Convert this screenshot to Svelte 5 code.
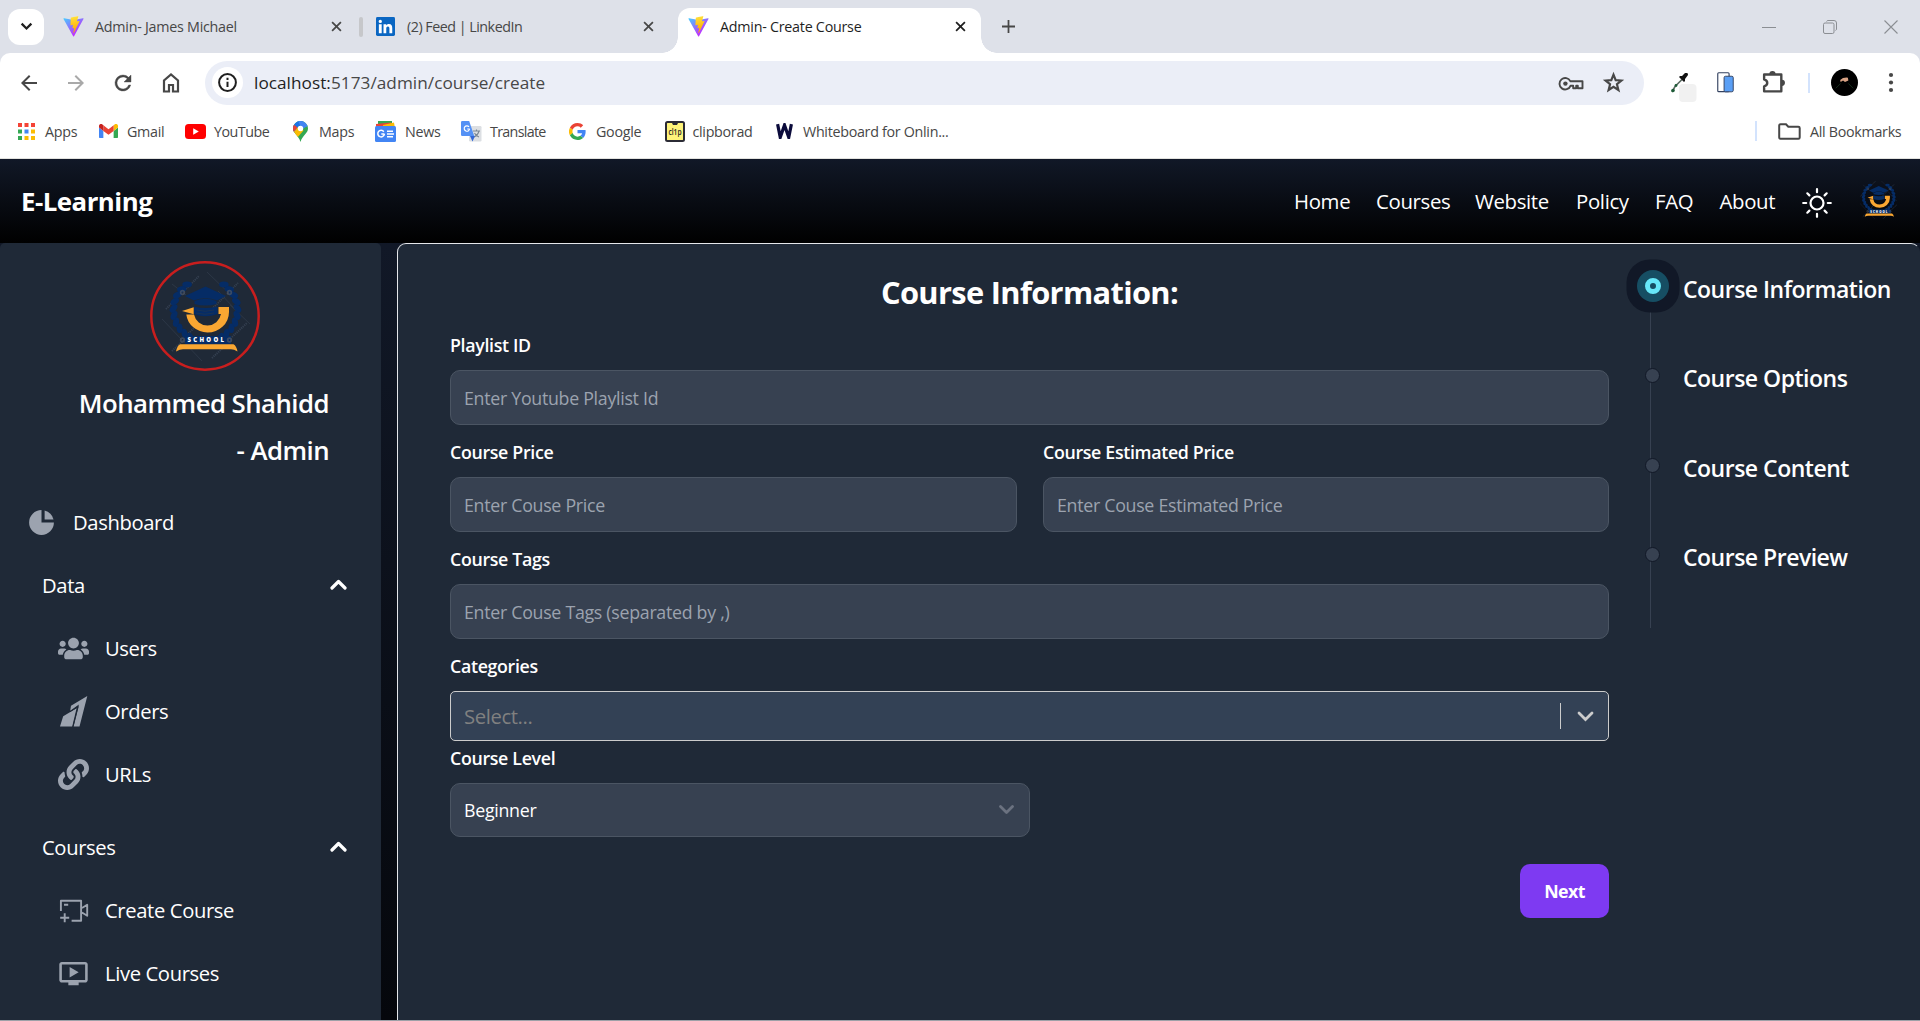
<script>
  const bookmarks = ['Apps', 'Gmail', 'YouTube', 'Maps', 'News', 'Translate', 'Google', 'clipborad', 'Whiteboard for Onlin...'];
  const navLinks = ['Home', 'Courses', 'Website', 'Policy', 'FAQ', 'About'];
  const sections = [
    { title: 'Data', items: ['Users', 'Orders', 'URLs'] },
    { title: 'Courses', items: ['Create Course', 'Live Courses'] },
  ];
  const steps = ['Course Information', 'Course Options', 'Course Content', 'Course Preview'];
  let current = $state(0);

  // Leaves of the laurel wreath, placed along two mirrored arcs
  const leaves = [];
  for (let i = 0; i < 10; i++) {
    const a = ((118 + i * 13) * Math.PI) / 180;
    leaves.push({ x: 55.5 + 32 * Math.cos(a), y: 49 + 31 * Math.sin(a), r: 118 + i * 13 });
  }
  const appDots = ['#f44336', '#f44336', '#f44336', '#34a853', '#4285f4', '#fbbc04', '#34a853', '#fbbc04', '#fbbc04'];
</script>

{#snippet vite(id)}
  <svg class="vite" viewBox="0 0 410 404" preserveAspectRatio="none">
    <defs>
      <linearGradient id="va{id}" x1="6" y1="33" x2="235" y2="344" gradientUnits="userSpaceOnUse"><stop stop-color="#41d1ff" /><stop offset="1" stop-color="#bd34fe" /></linearGradient>
      <linearGradient id="vb{id}" x1="194" y1="9" x2="236" y2="293" gradientUnits="userSpaceOnUse"><stop stop-color="#ffea83" /><stop offset=".08" stop-color="#ffdd35" /><stop offset="1" stop-color="#ffa800" /></linearGradient>
    </defs>
    <path fill="url(#va{id})" d="M399.641 59.5246L215.643 388.545C211.844 395.338 202.084 395.378 198.228 388.618L10.5817 59.5563C6.38087 52.1896 12.6802 43.2665 21.0281 44.7586L205.223 77.6824C206.398 77.8924 207.601 77.8904 208.776 77.6763L389.119 44.8058C397.439 43.2894 403.768 52.1434 399.641 59.5246Z" />
    <path fill="url(#vb{id})" d="M292.965 1.5744L156.801 28.2552C154.563 28.6937 152.906 30.5903 152.771 32.8664L144.395 174.33C144.198 177.662 147.258 180.248 150.51 179.498L188.42 170.749C191.967 169.931 195.172 173.055 194.443 176.622L183.18 231.775C182.422 235.487 185.907 238.661 189.532 237.56L212.947 230.446C216.577 229.344 220.065 232.527 219.297 236.242L201.398 322.875C200.278 328.294 207.486 331.249 210.492 326.603L212.5 323.5L323.454 102.072C325.312 98.3645 322.108 94.137 318.036 94.9228L279.014 102.454C275.347 103.161 272.227 99.746 273.262 96.1583L298.731 7.86689C299.767 4.27314 296.636 .855181 292.965 1.5744Z" />
  </svg>
{/snippet}

{#snippet cross()}
  <svg class="cross" viewBox="0 0 12 12"><path d="M1.2 1.2l9.6 9.6M10.8 1.2l-9.6 9.6" stroke="currentColor" stroke-width="1.9" /></svg>
{/snippet}

{#snippet school()}
  <g stroke="#3a4658" stroke-width=".6" opacity=".8">
    <path d="M22 23l14 11M57 11l28 27M12 58l40 42M68 30l16 17M80 44l20 19" fill="none" />
    <path d="M36 28L49 15M16 48l12-12M62 48L75 35M77 33l11-11M37 74l12-12M22 90l12-11M62 97l13-12M82 76l15-14" fill="none" stroke-width="2" stroke-dasharray="1.2 .9" />
  </g>
  <g fill="#052c66">
    {#each leaves as l}
      <ellipse cx={l.x} cy={l.y} rx="3" ry="4.8" transform="rotate({l.r + 35} {l.x} {l.y})" />
      <ellipse cx={111 - l.x} cy={l.y} rx="3" ry="4.8" transform="rotate({-l.r - 35} {111 - l.x} {l.y})" />
    {/each}
    <path d="M55.5 25.5L76 35 67 39.5Q55.5 35 44 39.5L35 35z" />
    <path d="M44.5 40Q55.5 35.5 66.5 40V43Q55.5 46 44.5 43z" />
    <path d="M44 45.5Q55.5 48.5 67.5 45.5V53Q55.5 57.5 44 53z" />
    <rect x="35" y="75" width="46" height="8.5" />
  </g>
  <path d="M46.5 49Q55 51.5 64 49M46 52Q55 54.5 64 52" fill="none" stroke="#1d3350" stroke-width=".9" />
  <g fill="none" stroke="#475264" stroke-width="1.8" opacity=".8"><circle cx="32.5" cy="31.5" r="1.800" /><circle cx="79.5" cy="31.5" r="1.800" /><circle cx="32.5" cy="79" r="1.800" /><circle cx="79.5" cy="79" r="1.800" /></g>
  <g fill="#faa732">
    <path d="M32 50l11.7-3.7v7z" />
    <path d="M36.3 53.5h7.7A13.8 13.8 0 0 0 57.5 64.500 14 14 0 0 0 71 53h-2.500v-7H79v5A21.3 20.5 0 0 1 57.5 71.5 21.3 20.5 0 0 1 36.3 53.5z" />
    <path d="M30 83.3Q27 85 26 90.5q4-2.300 7-2.300h48q3 0 6.500 2.300-1-5.500-4-7.200z" />
  </g>
  <text x="37.5" y="81.4" textLength="36.5" font-size="6" font-weight="800" fill="#fff">SCHOOL</text>
{/snippet}

{#snippet chevronUp()}
  <svg class="up" viewBox="0 0 17 11"><path d="M2 9l6.5-6.5L15 9" fill="none" stroke="#fff" stroke-width="3.2" stroke-linecap="round" stroke-linejoin="round" /></svg>
{/snippet}

<div class="window">
  <header class="browser">
    <div class="tabs">
      <button class="tab-search" aria-label="Search tabs"><svg viewBox="0 0 12 8"><path d="M1.5 1.5L6 6l4.5-4.5" fill="none" stroke="#1f1f1f" stroke-width="2.1" /></svg></button>
      <div class="tab first">{@render vite('a')}<span>Admin- James Michael</span>{@render cross()}</div>
      <i class="tab-sep"></i>
      <div class="tab second">
        <svg class="linkedin" viewBox="0 0 20 20"><rect width="20" height="20" rx="1.5" fill="#0a66c2" /><path fill="#fff" d="M3 7.6h3V17H3zM4.5 2.9a1.75 1.75 0 1 1 0 3.5 1.75 1.75 0 0 1 0-3.5zM7.9 7.6h2.8v1.3c.5-.9 1.5-1.5 2.9-1.5 2.8 0 3.5 1.8 3.5 4.3V17h-3v-4.7c0-1.2-.1-2.4-1.6-2.4s-1.7 1.2-1.7 2.3V17H7.9z" /></svg>
        <span class="tight">(2) Feed | LinkedIn</span>{@render cross()}
      </div>
      <div class="tab active">{@render vite('b')}<span>Admin- Create Course</span>{@render cross()}</div>
      <svg class="plus" viewBox="0 0 14 14"><path d="M7 0v14M0 7h14" stroke="#474747" stroke-width="1.9" /></svg>
      <div class="controls">
        <svg viewBox="0 0 14 14"><path d="M0 7.5h14" stroke="#8b8e93" /></svg>
        <svg viewBox="0 0 14 14"><rect x=".5" y="3" width="10.5" height="10.5" rx="1.5" fill="none" stroke="#8b8e93" /><path d="M3.5 1.5Q4 .5 5 .5h6q2.5 0 2.5 2.5v6q0 1-1 1.5" fill="none" stroke="#8b8e93" /></svg>
        <svg viewBox="0 0 14 14"><path d="M.5.5l13 13M13.500.5l-13 13" stroke="#8b8e93" stroke-width="1.1" /></svg>
      </div>
    </div>

    <div class="toolbar">
      <div class="history">
        <svg viewBox="0 0 24 24" fill="#474747"><path d="M20 11H7.83l5.59-5.59L12 4l-8 8 8 8 1.41-1.41L7.83 13H20v-2z" /></svg>
        <svg viewBox="0 0 24 24" fill="#a9a9a9"><path d="M12 4l-1.41 1.41L16.17 11H4v2h12.17l-5.58 5.59L12 20l8-8z" /></svg>
        <svg viewBox="0 0 24 24" fill="#474747"><path d="M17.65 6.35A7.96 7.96 0 0 0 12 4a8 8 0 1 0 7.73 10h-2.08A6 6 0 1 1 12 6c1.66 0 3.14.69 4.22 1.78L13 11h7V4z" stroke="#474747" stroke-width=".4" /></svg>
        <svg viewBox="0 0 24 24" fill="none" stroke="#474747" stroke-width="2.2"><path d="M5 20.5V9.5l7-6 7 6v11h-5v-6.500h-4v6.500z" /></svg>
      </div>
      <div class="omnibox">
        <i class="info"><svg viewBox="0 0 20 20"><circle cx="10" cy="10" r="8" fill="none" stroke="#1f1f1f" stroke-width="1.9" /><path d="M10 9.200v5M10 5.500v2" stroke="#1f1f1f" stroke-width="1.9" /></svg></i>
        <span class="url"><b>localhost:</b>5173/admin/course/create</span>
        <svg class="key" viewBox="0 0 26 16"><path d="M12.300 5.200H24.500v7h-4.700V9.800h-1.600v2.400h-3V9.800h-2.700A5.700 5.700 0 1 1 12.300 5.200z" fill="none" stroke="#474747" stroke-width="1.9" stroke-linejoin="round" /><circle cx="7.400" cy="7.600" r="2.200" fill="#474747" /></svg>
        <svg class="star" viewBox="0 0 24 24"><path d="M12 4.500l2.100 5.200 5.500.4-4.300 3.600 1.400 5.500-4.700-3-4.700 3 1.400-5.500-4.300-3.600 5.500-.4z" fill="none" stroke="#474747" stroke-width="2.1" /></svg>
      </div>
      <div class="extensions">
        <svg class="dropper" viewBox="0 0 28 30"><path d="M2 19L5 13.500l7-7" fill="none" stroke="#5b6b62" stroke-width="1.600" /><circle cx="3" cy="17.500" r="1.800" fill="#1d5b37" /><circle cx="6" cy="12.500" r="1.400" fill="#1d5b37" /><path d="M10 3h2l3-3q3-1 3 2l-3 4v2l-1 1-5-5z" fill="#111" /><rect x="9" y="11" width="17.500" height="18" rx="4" fill="#f1f1f1" /></svg>
        <svg class="device" viewBox="0 0 18 22"><rect x=".8" y=".8" width="12" height="20" rx="1" fill="#fff" stroke="#33415f" stroke-width="1.200" /><rect x="7.500" y="4.500" width="9.700" height="16.500" rx="1.500" fill="#5a9ff5" stroke="#33415f" /></svg>
        <svg class="puzzle" viewBox="0 0 24 24"><path d="M3 4.300h16.500v16.200H3v-4.800q3-1 3-3.300T3 9.100z" fill="none" stroke="#474747" stroke-width="2.300" stroke-linejoin="round" /><path d="M8 4a3 3 0 0 1 6 0zM20 9.300a3 3 0 0 1 0 6z" fill="#474747" /></svg>
        <i class="divider"></i>
        <svg class="profile" viewBox="0 0 28 28"><circle cx="14" cy="14" r="14" /><path d="M9.500 11.500q3-3 8-2.500l.5 3-3.500 1.500-2-1.500-2.500 1.500z" fill="#d9a284" /><path d="M5 20l5-5M23 20l-5-5" stroke="#1d3a25" stroke-width=".8" /></svg>
        <svg class="kebab" viewBox="0 0 6 22" fill="#474747"><circle cx="3" cy="3" r="2.100" /><circle cx="3" cy="10.500" r="2.100" /><circle cx="3" cy="18" r="2.100" /></svg>
      </div>
    </div>

    <div class="bookmarks">
      {#each bookmarks as name, i}
        <a class="bookmark" href="#{name}">
          {#if i === 0}
            <svg width="17" viewBox="0 0 17 17">{#each appDots as c, n}<rect x={(n % 3) * 6.5} y={Math.floor(n / 3) * 6.5} width="4" height="4" fill={c} />{/each}</svg>
          {:else if i === 1}
            <svg width="19" viewBox="0 0 24 18"><path fill="#4285f4" d="M1.600 18H5.500V8.700L0 4.500v12A1.600 1.600 0 0 0 1.600 18z" /><path fill="#34a853" d="M18.500 18h3.900a1.600 1.600 0 0 0 1.600-1.600V4.500l-5.500 4.200z" /><path fill="#fbbc04" d="M18.500 1.600v7.100L24 4.500V2.400c0-2-2.300-3.200-3.900-2z" /><path fill="#ea4335" d="M5.500 8.700V1.600L12 6.500l6.500-4.900v7.100L12 13.600z" /><path fill="#c5221f" d="M0 2.400v2.100l5.500 4.200V1.600L3.900.4C2.300-.8 0 .4 0 2.400z" /></svg>
          {:else if i === 2}
            <svg width="21" viewBox="0 0 21 15"><rect width="21" height="15" rx="3.500" fill="#f00" /><path d="M8.200 4.300l5.600 3.200-5.600 3.200z" fill="#fff" /></svg>
          {:else if i === 3}
            <svg width="15" viewBox="0 0 15 21"><defs><clipPath id="pin"><path d="M7.500 0A7.500 7.500 0 0 1 15 7.500c0 5-5.500 6.500-7.500 13.500C5.500 14 0 12.500 0 7.500A7.500 7.500 0 0 1 7.500 0z" /></clipPath></defs><g clip-path="url(#pin)"><rect width="15" height="21" fill="#34a853" /><path d="M0 0h10L2 12 0 10z" fill="#1a73e8" /><path d="M0 3l4.500 3.500L0 12z" fill="#ea4335" /><path d="M0 12L5.500 5.500l5 4L4 17z" fill="#fbbc04" /><path d="M5 0h10v5L9 8z" fill="#4285f4" /></g><circle cx="7.500" cy="7.500" r="2.700" fill="#fff" /></svg>
          {:else if i === 4}
            <svg width="21" viewBox="0 0 21 21"><path d="M3 0h14v6H3z" fill="#34a853" /><path d="M1 3l15-1.500 3 5H1z" fill="#ea4335" /><path d="M8 4l11-2.500 1 6H8z" fill="#fbbc04" /><rect y="5" width="21" height="16" rx="1.500" fill="#4285f4" /><path d="M9.500 13H6.300M8.800 10.700A3.300 3.300 0 1 0 9.400 13" fill="none" stroke="#fff" stroke-width="1.500" /><path d="M12 10.300h6M12 13h7M12 15.800h6" stroke="#fff" stroke-width="1.400" /></svg>
          {:else if i === 5}
            <svg width="21" viewBox="0 0 21 21"><rect x="8" y="5" width="12.500" height="15.500" rx="1.200" fill="#dcdfe3" /><path d="M12 10h7M15.500 8.500V10M18 10q-1 4-5 6M13.500 12q1.500 3 4.500 4" stroke="#7b8894" stroke-width="1.100" fill="none" /><path d="M9 15h5l-2.500 5.500z" fill="#3367d6" /><path d="M1.200 0h7l5 15H1.200A1.200 1.200 0 0 1 0 13.800V1.200A1.200 1.200 0 0 1 1.200 0z" fill="#5491f5" /><path d="M8.800 8H6.200M8 5.800A2.700 2.700 0 1 0 8.600 8" fill="none" stroke="#fff" stroke-width="1.200" /></svg>
          {:else if i === 6}
            <svg width="17" viewBox="0 0 48 48"><path fill="#ea4335" d="M24 9.500c3.540 0 6.710 1.220 9.210 3.600l6.850-6.850C35.900 2.380 30.470 0 24 0 14.620 0 6.510 5.380 2.560 13.220l7.980 6.190C12.430 13.720 17.740 9.500 24 9.500z" /><path fill="#4285f4" d="M46.980 24.550c0-1.570-.15-3.090-.38-4.550H24v9.020h12.940c-.58 2.960-2.260 5.480-4.780 7.180l7.730 6c4.510-4.180 7.090-10.360 7.090-17.650z" /><path fill="#fbbc05" d="M10.530 28.590a14.500 14.500 0 0 1 0-9.180l-7.980-6.190a24 24 0 0 0 0 21.560l7.980-6.190z" /><path fill="#34a853" d="M24 48c6.480 0 11.930-2.130 15.890-5.810l-7.730-6c-2.150 1.450-4.920 2.300-8.160 2.300-6.260 0-11.570-4.220-13.470-9.910l-7.980 6.190C6.510 42.620 14.620 48 24 48z" /></svg>
          {:else if i === 7}
            <svg width="20" viewBox="0 0 20 21"><rect x="1" y="1" width="18" height="19" rx="1.500" fill="#fff47a" stroke="#2b2b35" stroke-width="2" /><path d="M6.500 1h7l-1.500 3h-4z" fill="#2b2b35" /><text x="3.500" y="13.500" font-size="8" font-weight="600" textLength="13" lengthAdjust="spacingAndGlyphs" letter-spacing="0" fill="#222">cl1p</text></svg>
          {:else}
            <svg width="17" viewBox="0 0 16 15"><path d="M1.500 1l2.500 12.500L8 2l4 11.500L14.500 1" fill="none" stroke="#0b0b3b" stroke-width="3" /></svg>
          {/if}
          <span>{name}</span>
        </a>
      {/each}
      <i class="divider"></i>
      <a class="bookmark" href="#all">
        <svg width="23" viewBox="0 0 23 17"><path d="M1.200 14.500v-12q0-1.300 1.300-1.300h5.500l2.300 2.500h10q1.400 0 1.400 1.400v9.400q0 1.300-1.300 1.300h-18q-1.200 0-1.200-1.300z" fill="none" stroke="#474747" stroke-width="2" /></svg>
        <span>All Bookmarks</span>
      </a>
    </div>
  </header>

  <nav class="site-nav">
    <strong>E-Learning</strong>
    <div class="links">
      {#each navLinks as link}<a href="#{link}">{link}</a>{/each}
    </div>
    <svg class="sun" viewBox="0 0 30 30"><circle cx="15" cy="15" r="6.500" /><path d="M15 1.200v3M15 25.800v3M1.200 15h3M25.800 15h3M5.300 5.300l2.100 2.100M22.600 22.600l2.100 2.100M5.300 24.700l2.100-2.100M22.600 7.400l2.100-2.100" /></svg>
    <svg class="brand" viewBox="17 15 76 80">{@render school()}</svg>
  </nav>

  <div class="body">
    <aside class="sidebar">
      <svg class="avatar" viewBox="0 0 110 110"><circle cx="55" cy="55" r="53.700" fill="none" stroke="#c81e1e" stroke-width="2.500" />{@render school()}</svg>
      <h2>Mohammed Shahidd<br />- Admin</h2>
      <a class="row top" href="#dashboard">
        <svg width="31" height="31" viewBox="0 0 20 20"><path d="M2 10a8 8 0 018-8v8h8a8 8 0 11-16 0z" /><path d="M12 2.252A8.014 8.014 0 0117.748 8H12V2.252z" /></svg>
        <span>Dashboard</span>
      </a>
      {#each sections as section}
        <section>
          <div class="row head"><span>{section.title}</span>{@render chevronUp()}</div>
          {#each section.items as item}
            <a class="row" href="#{item}">
              {#if item === 'Users'}
                <svg width="31" height="31" viewBox="0 0 640 512"><path d="M96 224c35.300 0 64-28.700 64-64s-28.700-64-64-64-64 28.700-64 64 28.700 64 64 64zm448 0c35.300 0 64-28.700 64-64s-28.700-64-64-64-64 28.700-64 64 28.700 64 64 64zm32 32h-64c-17.600 0-33.500 7.100-45.100 18.600 40.300 22.100 68.900 62 75.100 109.400h66c17.700 0 32-14.300 32-32v-32c0-35.300-28.700-64-64-64zm-256 0c61.900 0 112-50.100 112-112S381.900 32 320 32 208 82.100 208 144s50.100 112 112 112zm76.800 32h-8.300c-20.800 10-43.900 16-68.500 16s-47.600-6-68.500-16h-8.300C179.600 288 128 339.600 128 403.200V432c0 26.500 21.500 48 48 48h288c26.500 0 48-21.500 48-48v-28.800c0-63.600-51.600-115.200-115.200-115.200zm-223.700-13.400C161.500 263.100 145.600 256 128 256H64c-35.300 0-64 28.700-64 64v32c0 17.700 14.300 32 32 32h65.900c6.300-47.400 34.900-87.300 75.200-109.400z" /></svg>
              {:else if item === 'Orders'}
                <svg width="31" height="31" viewBox="0 0 31 31"><path d="M29.300 0L13 9.800l-.8 5 8.700-6.300L15.500 30.500H21.500z" /><path d="M2 30.500l3.200-10.200 13.400-8-4.400 18.200z" /><path d="M12 15.600l8.200-5L15 30.800" fill="none" stroke="#1f2937" stroke-width="1" /></svg>
              {:else if item === 'URLs'}
                <svg width="31" height="31" viewBox="0 0 512 512"><path d="M326.612 185.391c59.747 59.809 58.927 155.698.36 214.590-.11.120-.240.250-.360.370l-67.200 67.200c-59.270 59.270-155.699 59.262-214.960 0-59.270-59.260-59.270-155.700 0-214.960l37.106-37.106c9.840-9.840 26.786-3.300 27.294 10.606.648 17.722 3.826 35.527 9.690 52.721 1.986 5.822.567 12.262-3.783 16.612l-13.087 13.087c-28.026 28.026-28.905 73.660-1.155 101.960 28.024 28.579 74.086 28.749 102.325.510l67.200-67.190c28.191-28.191 28.073-73.757 0-101.830-3.701-3.694-7.429-6.564-10.341-8.569a16.037 16.037 0 0 1-6.947-12.606c-.396-10.567 3.348-21.456 11.698-29.806l21.054-21.055c5.521-5.521 14.182-6.199 20.584-1.731a152.482 152.482 0 0 1 20.522 17.197zM467.547 44.449c-59.261-59.262-155.690-59.270-214.960 0l-67.200 67.200c-.120.120-.250.250-.360.370-58.566 58.892-59.387 154.781.360 214.590a152.454 152.454 0 0 0 20.521 17.196c6.402 4.468 15.064 3.789 20.584-1.731l21.054-21.055c8.350-8.350 12.094-19.239 11.698-29.806a16.037 16.037 0 0 0-6.947-12.606c-2.912-2.005-6.640-4.875-10.341-8.569-28.073-28.073-28.191-73.639 0-101.830l67.200-67.190c28.239-28.239 74.300-28.069 102.325.510 27.750 28.300 26.872 73.934-1.155 101.960l-13.087 13.087c-4.350 4.350-5.769 10.790-3.783 16.612 5.864 17.194 9.042 34.999 9.690 52.721.509 13.906 17.454 20.446 27.294 10.606l37.106-37.106c59.271-59.259 59.271-155.699.001-214.959z" /></svg>
              {:else if item === 'Create Course'}
                <svg width="31" height="31" viewBox="0 0 31 31" class="lines"><path d="M2.900 16V5.700h20.200v20h-9.500M24 13l5.200-3.300v11L24 17.500M6 9.800h4.200M6.700 18.300v9M2.200 22.800h9" /></svg>
              {:else}
                <svg width="31" height="31" viewBox="0 0 24 24"><path d="M21 3H3c-1.110 0-2 .89-2 2v12c0 1.100.89 2 2 2h5v2h8v-2h5c1.100 0 1.990-.9 1.990-2L23 5c0-1.110-.9-2-2-2zm0 14H3V5h18v12zm-5-6l-7 4V7z" /></svg>
              {/if}
              <span>{item}</span>
            </a>
          {/each}
        </section>
      {/each}
    </aside>

    <main>
      <form>
        <h1>Course Information:</h1>
        <label>Playlist ID<input placeholder="Enter Youtube Playlist Id" /></label>
        <div class="pair">
          <label>Course Price<input placeholder="Enter Couse Price" /></label>
          <label>Course Estimated Price<input placeholder="Enter Couse Estimated Price" /></label>
        </div>
        <label>Course Tags<input placeholder="Enter Couse Tags (separated by ,)" /></label>
        <div class="field">
          Categories
          <div class="combo"><span>Select...</span><i></i><svg viewBox="0 0 17 11"><path d="M2 2l6.500 6.500L15 2" fill="none" stroke="#ccc" stroke-width="2.800" stroke-linecap="round" /></svg></div>
        </div>
        <div class="field level">
          Course Level
          <div class="select"><span>Beginner</span><svg viewBox="0 0 15 10"><path d="M1.500 1.500l6 6 6-6" fill="none" stroke="#6b7280" stroke-width="2.800" stroke-linecap="round" stroke-linejoin="round" /></svg></div>
        </div>
        <button type="button" class="next" onclick={() => (current = Math.min(current + 1, 3))}>Next</button>
      </form>

      <ol class="steps">
        {#each steps as step, i}
          <li class:current={i === current}><i class="dot"></i><span>{step}</span></li>
        {/each}
      </ol>
    </main>
  </div>
</div>

<style>
  :global(body) { margin: 0; overflow: hidden; }
  * { box-sizing: border-box; }
  svg { display: block; flex: none; }
  a { color: inherit; text-decoration: none; }
  button { border: 0; padding: 0; font: inherit; }
  .window { width: 1920px; height: 1021px; display: flex; flex-direction: column; overflow: hidden; font-family: 'Open Sans', 'Noto Sans', sans-serif; border-bottom: 1px solid #9da1a8; }

  /* Browser chrome */
  .browser { height: 159px; flex: none; background: #dee1e9; border-bottom: 1px solid #e2e2de; color: #474747; font-size: 14.3px; letter-spacing: -0.3px; white-space: nowrap; }
  .tabs { height: 53px; display: flex; align-items: center; padding-left: 8px; }
  .tab-search { width: 36px; height: 36px; border-radius: 12px; background: #fff; display: grid; place-items: center; }
  .tab-search svg { width: 13px; }
  .tab { display: flex; align-items: center; }
  .tab :global(.cross) { width: 11px; margin-left: auto; }
  .first { width: 279px; margin-left: 19px; }
  .second { width: 278px; margin-left: 13px; }
  .vite { width: 21px; height: 21px; margin-right: 11px; }
  .first span, .active span { letter-spacing: -0.25px; }
  .linkedin { width: 19px; height: 19px; margin-right: 12px; }
  .second .tight { letter-spacing: -0.5px; }
  .tab-sep { width: 4px; height: 20px; border-radius: 2px; background: #c6c7ca; margin-left: 17px; }
  .active { position: relative; align-self: flex-end; height: 45px; width: 303px; margin-left: 24px; padding: 0 15px 9px 10px; background: #fff; border-radius: 12px 12px 0 0; color: #1f1f1f; }
  .active::before, .active::after { content: ''; position: absolute; bottom: 0; width: 16px; height: 16px; }
  .active::before { left: -16px; background: radial-gradient(circle at 0 0, transparent 15.5px, #fff 16px); }
  .active::after { right: -16px; background: radial-gradient(circle at 100% 0, transparent 15.5px, #fff 16px); }
  .plus { width: 13px; margin-left: 21px; }
  .controls { display: flex; gap: 47px; margin-left: auto; padding-right: 22px; }
  .controls svg { width: 14px; }

  .toolbar { height: 59px; display: flex; align-items: center; background: #fff; border-radius: 10px 10px 0 0; padding-left: 17px; }
  .history { display: flex; gap: 23.2px; width: 188px; }
  .history svg { width: 24px; }
  .omnibox { width: 1439px; height: 44px; border-radius: 22px; background: #ebeef7; display: flex; align-items: center; padding-left: 7px; }
  .info { width: 31px; height: 31px; border-radius: 50%; background: #fff; display: grid; place-items: center; margin-right: 11px; }
  .info svg { width: 21px; }
  .url { font-size: 17.2px; letter-spacing: 0.04px; color: #474747; }
  .url b { font-weight: 400; color: #1f1f1f; }
  .key { width: 26px; margin: 2px 17px 0 auto; }
  .star { width: 25px; margin-right: 18px; }
  .extensions { flex: 1; display: flex; align-items: center; }
  .dropper { width: 28px; margin: 10px 0 0 26px; }
  .device { width: 17px; margin-left: 19px; }
  .puzzle { width: 25px; margin-left: 27px; }
  .divider { width: 2px; height: 20px; background: #d3e3fd; }
  .extensions .divider { margin-left: 22px; }
  .profile { width: 27px; margin-left: 21px; }
  .kebab { width: 6px; margin-left: 30px; }

  .bookmarks { height: 46px; background: #fff; display: grid; grid-template-columns: 81px 86px 108px 82px 86px 108px 95.5px 111.5px 979px 23px auto; align-items: center; padding: 0 0 8px 18px; }
  .bookmark { display: flex; align-items: center; gap: 9px; }
  .bookmark:nth-child(4) { gap: 11px; }
  .bookmark:nth-child(1), .bookmark:nth-child(7), .bookmark:nth-child(9) { gap: 10px; }
  .bookmark:nth-child(6) { gap: 8px; letter-spacing: -0.7px; }
  .bookmark:nth-child(3) { gap: 8px; letter-spacing: -0.5px; }
  .bookmark:nth-child(8) { gap: 8px; }

  /* Site navigation */
  .site-nav { height: 84px; flex: none; display: flex; align-items: center; padding: 0 23px 0 21px; color: #fff; background: linear-gradient(#111827, #000); }
  .site-nav strong { font-size: 25.8px; letter-spacing: -0.5px; }
  .links { display: grid; grid-template-columns: 82px 99px 101px 79px 64.5px 82.5px; margin-left: auto; font-size: 20.4px; letter-spacing: -0.35px; }
  .sun { width: 30px; margin-top: 4px; fill: none; stroke: #fff; stroke-width: 2.2; stroke-linecap: round; }
  .brand { width: 37px; height: 38px; margin: 0 0 2px 28px; }

  .body { flex: 1; display: flex; gap: 16px; min-height: 0; background: linear-gradient(#111827, #05070c); color: #fff; }

  /* Sidebar */
  .sidebar { width: 381px; flex: none; background: #1f2937; border-radius: 5px 5px 0 0; padding-top: 18px; overflow: hidden; }
  .avatar { width: 110px; height: 110px; margin-left: 149.5px; }
  .sidebar h2 { margin: 9px 52px 16px 0; font-size: 25.8px; font-weight: 600; line-height: 47.25px; letter-spacing: -0.55px; text-align: right; }
  .row { height: 63px; display: flex; align-items: center; gap: 16px; padding-left: 58px; font-size: 20.2px; letter-spacing: -0.36px; }
  .row svg { fill: #9ca3af; }
  .row .lines { fill: none; stroke: #9ca3af; stroke-width: 1.9; stroke-linejoin: round; }
  .top { padding-left: 26px; }
  .head { justify-content: space-between; padding: 0 34px 0 42px; }
  .head :global(.up) { width: 17px; fill: none; margin-bottom: 1px; }
  section { margin-bottom: 10px; }

  /* Course form */
  main { flex: 1; display: flex; background: #1f2937; border: 1px solid #e5e7eb; border-bottom: 0; border-right-color: transparent; border-radius: 9px 9px 0 0; padding: 24px 0 0 52px; }
  form { width: 1159px; flex: none; display: flex; flex-direction: column; }
  h1 { margin: 0 0 16px; height: 48px; line-height: 48px; font-size: 30.8px; font-weight: 700; letter-spacing: -0.65px; text-align: center; }
  label, .field { display: block; font-size: 17.8px; font-weight: 600; letter-spacing: -0.33px; line-height: 26px; margin-bottom: 14px; }
  input, .select, .combo { display: flex; align-items: center; width: 100%; margin-top: 12px; padding: 0 14px 0 13px; font-family: inherit; font-weight: 400; }
  input, .select { height: 55px; border: 1px solid #4b5563; border-radius: 10px; background: #374151; color: #fff; font-size: 17.8px; letter-spacing: -0.29px; }
  input { outline: none; }
  input::placeholder { color: #9ca3af; opacity: 1; }
  .pair { display: grid; grid-template-columns: 567px 566px; gap: 26px; }
  .combo { height: 50px; border: 1px solid #ccc; border-radius: 5px; background: #334155; color: #808080; font-size: 20.3px; letter-spacing: -0.4px; padding-right: 14px; }
  .combo i { width: 1px; height: 26px; background: #ccc; margin: 0 16px 0 auto; }
  .combo svg { width: 17px; }
  .field:has(.combo) { margin-bottom: 4px; }
  .level { width: 580px; margin-bottom: 27px; }
  .select { height: 54px; padding-right: 15px; }
  .select svg { width: 15px; margin-left: auto; }
  .next { align-self: flex-end; width: 89px; height: 54px; border-radius: 10px; background: #7e3af2; color: #fff; font-size: 17.8px; font-weight: 700; letter-spacing: -0.6px; }

  /* Step list */
  .steps { list-style: none; margin: -1px 0 0 41px; padding: 0; height: 361px; border-left: 1px solid #374151; }
  .steps li { height: 89.4px; display: flex; align-items: flex-start; gap: 23.5px; margin-left: -6.5px; font-size: 23px; font-weight: 600; letter-spacing: -0.5px; white-space: nowrap; line-height: 39px; }
  .steps span { margin-top: 3px; }
  .dot { width: 15px; height: 15px; margin-top: 12px; flex: none; border-radius: 50%; background: #374151; border: 1px solid #111827; }
  .current .dot { width: 16px; height: 16px; margin-top: 11px; margin-right: -1px; background: #164e63; border: 5px solid #67e8f9; box-shadow: 0 0 0 8px #164e63, 0 0 0 18.5px #111827; }
</style>
